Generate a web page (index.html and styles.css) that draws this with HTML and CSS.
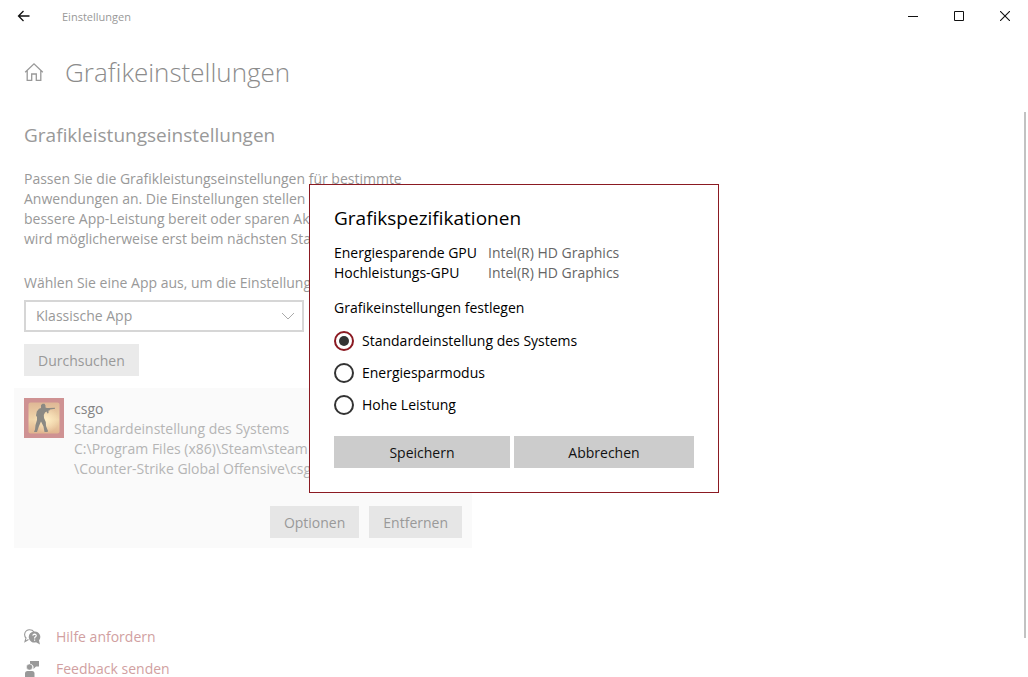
FILE: index.html
```html
<!DOCTYPE html>
<html lang="de">
<head>
<meta charset="utf-8">
<meta name="viewport" content="width=device-width, initial-scale=1">
<title>Einstellungen</title>
<link rel="stylesheet" href="styles.css">
</head>
<body>
<div class="window">
  <header class="titlebar">
    <button class="caption-button back" type="button" aria-label="Zurück">
      <svg width="14" height="12" viewBox="0 0 14 12"><path d="M1.5 6H12.5M6.5 1L1.5 6L6.5 11" fill="none" stroke="#111" stroke-width="1.3"/></svg>
    </button>
    <span class="app-name">Einstellungen</span>
    <div class="caption-group">
      <button class="caption-button" type="button" aria-label="Minimieren">
        <svg width="10" height="10" viewBox="0 0 10 10"><path d="M0 5.5H10" stroke="#111"/></svg>
      </button>
      <button class="caption-button" type="button" aria-label="Maximieren">
        <svg width="10" height="10" viewBox="0 0 10 10"><path d="M.5 .5H9.5V9.5H.5Z" fill="none" stroke="#111"/></svg>
      </button>
      <button class="caption-button" type="button" aria-label="Schließen">
        <svg width="10" height="10" viewBox="0 0 10 10"><path d="M0 0L10 10M10 0L0 10" stroke="#111" stroke-width="1.1"/></svg>
      </button>
    </div>
  </header>

  <main class="page">
    <div class="page-head">
      <svg class="home" width="20" height="20" viewBox="0 0 20 20"><path d="M1.2 10.3L10 1.8L18.800 10.300M3.200 8.700V18.300H7.700V12H12.300V18.300H16.800V8.700" fill="none" stroke="#999" stroke-width="1.300"/></svg>
      <h1 class="page-title">Grafikeinstellungen</h1>
    </div>

    <h2 class="section-title">Grafikleistungseinstellungen</h2>
    <p class="intro">Passen Sie die Grafikleistungseinstellungen für bestimmte<br>Anwendungen an. Die Einstellungen stellen<br>bessere App-Leistung bereit oder sparen Ak<br>wird möglicherweise erst beim nächsten Sta</p>

    <label class="field-label" for="app-type">Wählen Sie eine App aus, um die Einstellung</label>
    <div class="select-box">
      <select class="select" id="app-type"><option>Klassische App</option></select>
      <svg class="chevron" width="14" height="8" viewBox="0 0 14 8"><path d="M1 1L7 7L13 1" fill="none" stroke="#aaa"/></svg>
    </div>
    <button class="button muted" type="button">Durchsuchen</button>

    <section class="app-card">
      <svg class="app-icon" width="40" height="40" viewBox="0 0 40 40">
        <defs>
          <linearGradient id="sky" x1="0" y1="0" x2="0" y2="1"><stop offset="0" stop-color="#dfb795"/><stop offset=".55" stop-color="#f0d6ab"/><stop offset="1" stop-color="#e0b48f"/></linearGradient>
          <radialGradient id="glow"><stop offset="0" stop-color="#ffedc4"/><stop offset="1" stop-color="#ffedc4" stop-opacity="0"/></radialGradient>
        </defs>
        <rect width="40" height="40" fill="#cf9293"/>
        <rect x="4.500" y="4.500" width="31" height="31" rx="2" fill="url(#sky)"/>
        <circle cx="22" cy="22" r="13" fill="url(#glow)"/>
        <path d="M17 7L18.500 5.800H20.500L21.500 7.500V9.500L23 10H25L31 9.800V10.800L26 11.500L25.500 12.500L24.500 12.500L24.500 15L23.500 15.500L22.500 13.500L21 14.500L19.800 17L20 20L21.800 24L22 28L24 33L23.500 34H20.500L19.500 28.500L17 23.500L15 28L13 34H10L11 31.500L11.500 27L13 22V19L12 17.500L12.800 13.500L15 10.800L17 10Z" fill="#8b8983"/>
      </svg>
      <div class="app-info">
        <h3 class="app-title">csgo</h3>
        <p class="app-detail">Standardeinstellung des Systems<br>C:\Program Files (x86)\Steam\steam<br>\Counter-Strike Global Offensive\csg</p>
      </div>
      <div class="app-actions">
        <button class="button muted" type="button">Optionen</button>
        <button class="button muted" type="button">Entfernen</button>
      </div>
    </section>

    <nav class="links">
      <a class="link" href="#hilfe">
        <svg width="17" height="16" viewBox="0 0 17 16"><path d="M4.500 10.500L1 12.500L2 9Q.6 7.500 .6 5.500Q1 1.500 5 .8Q8.500 .6 10 3" fill="none" stroke="#999" stroke-width="1.100"/><path d="M10.500 2.500A5.500 5.500 0 1 0 12 13.200L16 15.500L15 11.500A5.500 5.500 0 0 0 10.500 2.500Z" fill="#999"/><path d="M8.800 6.600Q9 5.100 10.600 5.100Q12.300 5.200 12.200 6.700Q12.100 7.500 11.200 8.100Q10.600 8.500 10.600 9.500M10.600 10.500V11.700" fill="none" stroke="#fff" stroke-width="1.200"/></svg>
        <span>Hilfe anfordern</span>
      </a>
      <a class="link" href="#feedback">
        <svg width="17" height="16" viewBox="0 0 17 16"><path d="M6 0H15V5.500H12L9.500 8V5.500L8.800 4.200Q8 3.200 6 3Z" fill="#999"/><circle cx="5.500" cy="6" r="3.100" fill="#999" stroke="#fff" stroke-width=".6"/><path d="M1 16V12.500Q1 10 3.500 10H8Q10.500 10 10.500 12.500V16Z" fill="#999"/></svg>
        <span>Feedback senden</span>
      </a>
    </nav>
  </main>
  <div class="scroll-thumb"></div>
</div>

<div class="overlay">
  <form class="dialog" role="dialog" aria-labelledby="dialog-title">
    <h2 class="dialog-title" id="dialog-title">Grafikspezifikationen</h2>
    <dl class="specs">
      <dt>Energiesparende GPU</dt><dd>Intel(R) HD Graphics</dd>
      <dt>Hochleistungs-GPU</dt><dd>Intel(R) HD Graphics</dd>
    </dl>
    <fieldset class="choices">
      <legend class="legend">Grafikeinstellungen festlegen</legend>
      <label class="choice"><input class="radio" type="radio" name="gpu" checked><span>Standardeinstellung des Systems</span></label>
      <label class="choice"><input class="radio" type="radio" name="gpu"><span>Energiesparmodus</span></label>
      <label class="choice"><input class="radio" type="radio" name="gpu"><span>Hohe Leistung</span></label>
    </fieldset>
    <div class="dialog-actions">
      <button class="button" type="button">Speichern</button>
      <button class="button" type="button">Abbrechen</button>
    </div>
  </form>
</div>
</body>
</html>
```
FILE: styles.css
```css
* { box-sizing: border-box; }

body {
  margin: 0;
  background: #fff;
  color: #999;
  font: 14px/20px "Open Sans", "Noto Sans", sans-serif;
}

h1, h2, h3, p, dl, dd { margin: 0; font-weight: 400; }

button, select { font: inherit; color: inherit; border: 0; border-radius: 0; }

.window { position: relative; min-height: 100vh; overflow: hidden; }

.titlebar { display: flex; align-items: center; height: 32px; }
.caption-button {
  display: flex;
  align-items: center;
  justify-content: center;
  width: 46px;
  height: 32px;
  padding: 0;
  background: none;
}
.back { width: 48px; }
.app-name { margin-left: 14px; padding-top: 2px; font-size: 11px; }
.caption-group { display: flex; margin-left: auto; }

.page { padding: 20px 24px 0; }
.page-head { display: flex; align-items: center; gap: 21px; height: 40px; }
.page-title { font-size: 26px; line-height: 40px; font-weight: 300; color: #8c8c8c; }
.section-title { margin-top: 29px; font-size: 19px; line-height: 28px; }
.intro { margin-top: 20px; }
.field-label { display: block; margin-top: 24px; }

.select-box { position: relative; width: 280px; margin-top: 7px; margin-bottom: 12px; }
.select {
  appearance: none;
  display: block;
  width: 100%;
  height: 32px;
  padding: 0 32px 0 10px;
  border: 2px solid #d6d6d6;
  background: #fff;
}
.chevron { position: absolute; right: 9px; top: 12px; }

.button { height: 32px; padding: 2px 14px 0; background: #ccc; color: #111; }
.muted { background: #eaeaea; color: #999; }

.app-card {
  display: grid;
  grid-template-columns: 40px 1fr;
  column-gap: 10px;
  max-width: 458px;
  margin: 12px 0 0 -10px;
  padding: 10px;
  background: #fafafa;
}
.app-card .muted { background: #e6e6e6; }
.app-info { padding-top: 1px; }
.app-title { font-size: 14px; line-height: 20px; color: #858585; }
.app-detail { color: #b5b5b5; white-space: nowrap; }
.app-actions { grid-column: 1 / -1; display: flex; justify-content: flex-end; gap: 10px; margin-top: 27px; }

.links { display: grid; justify-items: start; gap: 12px; margin-top: 79px; }
.link { display: flex; align-items: center; gap: 15px; color: #d19fa1; text-decoration: none; }

.scroll-thumb { position: absolute; top: 112px; right: 2px; width: 2px; height: 526px; background: #c2c2c2; }

.overlay { position: fixed; inset: 0; display: flex; align-items: center; justify-content: center; }
.dialog { width: 410px; max-width: 100%; padding: 19px 24px 24px; border: 1px solid #8b1a22; background: #fff; color: #000; }
.dialog-title { font-size: 19px; line-height: 28px; }
.specs { display: grid; grid-template-columns: 144px 1fr; column-gap: 10px; margin-top: 11px; }
.specs dd { color: #666; }
.choices { margin: 15px 0 0; padding: 0; border: 0; }
.legend { padding: 0; margin-bottom: 7px; }
.choice { display: flex; align-items: center; gap: 8px; height: 32px; }
.radio {
  appearance: none;
  display: grid;
  place-items: center;
  width: 20px;
  height: 20px;
  margin: 0;
  border: 2px solid #333;
  border-radius: 50%;
}
.radio:checked { border-color: #8b1a22; }
.radio:checked::before { content: ""; width: 10px; height: 10px; border-radius: 50%; background: #333; }
.dialog-actions { display: grid; grid-template-columns: 44fr 45fr; gap: 4px; margin-top: 15px; }
```
